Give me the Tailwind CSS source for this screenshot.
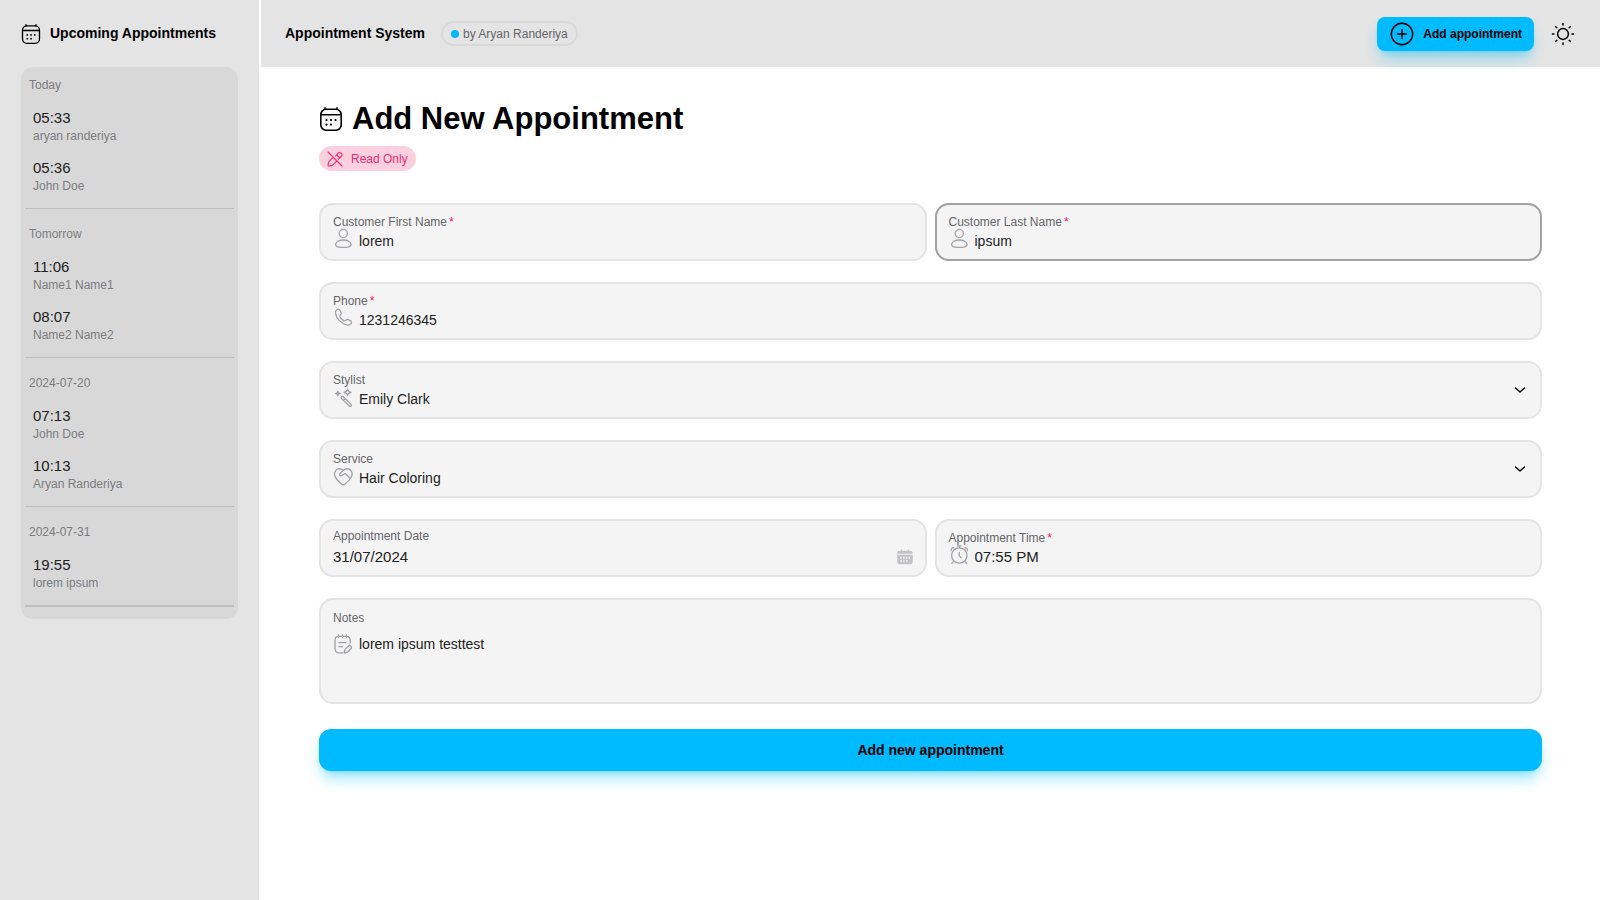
<!DOCTYPE html>
<html lang="en">
<head>
<meta charset="utf-8">
<meta name="viewport" content="width=device-width, initial-scale=1">
<title>Appointment System</title>
<script src="https://cdn.jsdelivr.net/npm/@tailwindcss/browser@4"></script>
</head>
<body class="min-h-screen flex gap-0.5 bg-white font-['Liberation_Sans',Arial,sans-serif] text-[#11181c]">

<svg class="hidden" aria-hidden="true">
  <symbol id="calendar" viewBox="0 0 24 24">
    <g fill="none" stroke="currentColor" stroke-width="1.600" stroke-linecap="round"><rect x="1.800" y="2.300" width="20.400" height="20.900" rx="5.200"/><path d="M6 2.300V.9M18 2.300V.9M2 7.800h20"/></g>
    <path fill="none" stroke="currentColor" stroke-width="2.200" stroke-linecap="round" d="M7.500 13.100h.01M12 13.100h.01M16.500 13.100h.01M7.500 17.600h.01M12 17.600h.01"/>
  </symbol>
  <symbol id="user" viewBox="0 0 20 20">
    <g fill="none" stroke="currentColor" stroke-width="1.3"><circle cx="10.300" cy="5.500" r="4.100"/><path d="M10.300 12c-4.300 0-7.700 2-7.700 4.400 0 2.300 2 3 7.700 3s7.700-.7 7.700-3c0-2.400-3.400-4.400-7.700-4.400z"/></g>
  </symbol>
</svg>

<aside class="w-[259px] shrink-0 bg-[#e4e4e4]">
  <h2 class="h-[67px] flex items-center gap-[9px] pl-[21px] text-[14px] font-bold text-black">
    <svg class="size-5"><use href="#calendar"/></svg>Upcoming Appointments
  </h2>
  <div class="ml-[21px] mr-[21px] rounded-xl bg-[#d8d8d8] px-1 pt-2 pb-3 flex flex-col gap-[15px] text-[12px] text-[#7c7c80]">
    <section class="flex flex-col gap-[13px] border-b border-[#bdbdbd] pb-[13px]">
      <h3 class="px-1 leading-5">Today</h3>
      <div class="px-2 leading-[18px]"><p class="text-[15px] leading-[19px] text-[#222]">05:33</p><p>aryan randeriya</p></div>
      <div class="px-2 leading-[18px]"><p class="text-[15px] leading-[19px] text-[#222]">05:36</p><p>John Doe</p></div>
    </section>
    <section class="flex flex-col gap-[13px] border-b border-[#bdbdbd] pb-[13px]">
      <h3 class="px-1 leading-5">Tomorrow</h3>
      <div class="px-2 leading-[18px]"><p class="text-[15px] leading-[19px] text-[#222]">11:06</p><p>Name1 Name1</p></div>
      <div class="px-2 leading-[18px]"><p class="text-[15px] leading-[19px] text-[#222]">08:07</p><p>Name2 Name2</p></div>
    </section>
    <section class="flex flex-col gap-[13px] border-b border-[#bdbdbd] pb-[13px]">
      <h3 class="px-1 leading-5">2024-07-20</h3>
      <div class="px-2 leading-[18px]"><p class="text-[15px] leading-[19px] text-[#222]">07:13</p><p>John Doe</p></div>
      <div class="px-2 leading-[18px]"><p class="text-[15px] leading-[19px] text-[#222]">10:13</p><p>Aryan Randeriya</p></div>
    </section>
    <section class="flex flex-col gap-[13px] border-b-2 border-[#bdbdbd] pb-[13px]">
      <h3 class="px-1 leading-5">2024-07-31</h3>
      <div class="px-2 leading-[18px]"><p class="text-[15px] leading-[19px] text-[#222]">19:55</p><p>lorem ipsum</p></div>
    </section>
  </div>
</aside>

<div class="flex-1 min-w-0">
  <header class="h-[67px] bg-[#e4e4e4] flex items-center pl-6 pr-6">
    <span class="text-[14px] font-bold text-black">Appointment System</span>
    <a href="#" class="ml-4 flex h-[25px] items-center gap-1 rounded-full border-2 border-[#d8d8d8] px-2 text-[12px] text-[#66666a]"><span class="size-2 rounded-full bg-[#00b7fd]"></span>by Aryan Randeriya</a>
    <button type="button" class="ml-auto flex h-[34px] items-center gap-2 rounded-lg bg-[#00bbff] px-3 text-[12px] font-bold text-black shadow-lg shadow-[#00bbff]/40">
      <svg class="size-[26px]" viewBox="0 0 26 26" fill="none" stroke="currentColor" stroke-width="1.500" stroke-linecap="round"><circle cx="13" cy="13" r="10.700"/><path d="M13 8.500v9M8.500 13h9"/></svg>
      Add appointment
    </button>
    <button type="button" aria-label="Toggle theme" class="ml-4 text-black">
      <svg class="size-[26px]" viewBox="0 0 26 26" fill="none" stroke="currentColor" stroke-width="1.500" stroke-linecap="round"><circle cx="13" cy="13" r="5.400"/><path d="M13 2.500v1.500M13 22v1.500M2.500 13h1.500M22 13h1.500M5.600 5.600l1.200 1.200M19.200 19.200l1.200 1.200M5.600 20.400l1.200-1.200M19.200 6.800l1.200-1.200"/></svg>
    </button>
  </header>

  <main class="px-[58px] pt-8 pb-8">
    <h1 class="flex h-10 items-center gap-[9px] text-[31px] font-bold text-black"><svg class="size-6"><use href="#calendar"/></svg>Add New Appointment</h1>
    <span class="mt-[7px] inline-flex h-[25px] items-center gap-2 rounded-full bg-[#fdd0df] px-2 text-[12px] text-[#f02c72] align-top">
      <svg class="size-4" viewBox="0 0 16 16" fill="none" stroke="currentColor" stroke-width="1.200" stroke-linecap="round" stroke-linejoin="round"><path d="M1 1l14 14M8.700 4.800l2.200-2.500c1.100-1.200 2.300-1 3.300 0 1 .9 1.100 2.100 0 3.200l-2.800 2.600M6.300 6.100L2.200 10.400c-.5.500-.7 1-.8 1.700l-.3 2c-.1.700.3 1 1 .9l2-.3c.7-.1 1.200-.3 1.700-.8l4.100-4.100M9.800 3.500c.5 1.700 1.600 2.800 3.300 3.300"/></svg>
      Read Only
    </span>

    <form class="mt-8 flex flex-col gap-[21px]">
      <div class="grid grid-cols-2 gap-2">
        <div class="h-[58px] rounded-[14px] border-2 border-[#e4e4e4] bg-[#f4f4f4] px-3 pt-2">
          <label for="first" class="block text-[12px] leading-[18px] text-[#66666a]">Customer First Name<span class="ml-0.5 text-[#f31260]">*</span></label>
          <div class="flex items-center gap-1.5 text-[#a1a1a6]"><svg class="-mt-1.5 size-5 shrink-0"><use href="#user"/></svg><input id="first" value="lorem" class="min-w-0 flex-1 bg-transparent text-[14px] leading-5 text-[#222] outline-none"></div>
        </div>
        <div class="h-[58px] rounded-[14px] border-2 border-[#a1a1a6] bg-[#f4f4f4] px-3 pt-2">
          <label for="last" class="block text-[12px] leading-[18px] text-[#66666a]">Customer Last Name<span class="ml-0.5 text-[#f31260]">*</span></label>
          <div class="flex items-center gap-1.5 text-[#a1a1a6]"><svg class="-mt-1.5 size-5 shrink-0"><use href="#user"/></svg><input id="last" value="ipsum" class="min-w-0 flex-1 bg-transparent text-[14px] leading-5 text-[#222] outline-none"></div>
        </div>
      </div>

      <div class="h-[58px] rounded-[14px] border-2 border-[#e4e4e4] bg-[#f4f4f4] px-3 pt-2">
        <label for="phone" class="block text-[12px] leading-[18px] text-[#66666a]">Phone<span class="ml-0.5 text-[#f31260]">*</span></label>
        <div class="flex items-center gap-1.5 text-[#a1a1a6]">
          <svg class="-mt-1.5 size-5 shrink-0" viewBox="0 0 20 20" fill="none" stroke="currentColor" stroke-width="1.300" stroke-linejoin="round"><path d="M6.900 3.100c-.6-1.300-2-1.300-3-.6C2.500 3.400 2.300 4.800 2.500 6.300c.4 2.600 1.900 5.400 4.100 7.600s5 3.800 7.600 4.200c1.500.2 2.900 0 3.800-1.400.7-1 .7-2.400-.6-3l-2-1c-.9-.4-1.600-.3-2.200.4-.8.900-1.600 1.100-2.700.4-1.300-.8-2.500-2-3.300-3.300-.7-1.100-.5-1.900.4-2.700.7-.6.800-1.300.4-2.200z"/></svg>
          <input id="phone" type="tel" value="1231246345" class="min-w-0 flex-1 bg-transparent text-[14px] leading-5 text-[#222] outline-none"></div>
      </div>

      <div class="flex h-[58px] items-center rounded-[14px] border-2 border-[#e4e4e4] bg-[#f4f4f4] px-3">
        <div class="min-w-0 flex-1">
          <label for="stylist" class="block text-[12px] leading-[18px] text-[#66666a]">Stylist</label>
          <div class="flex items-center gap-1.5 text-[#a1a1a6]">
            <svg class="-mt-0.5 size-5 shrink-0" viewBox="0 0 20 20" fill="none" stroke="currentColor" stroke-width="1.300" stroke-linejoin="round"><path d="M8.400 8.700c.6-.6 1.400-.6 2 0l7.600 7.600c.6.600.6 1.300.1 1.800s-1.200.5-1.800-.1L8.500 10.600c-.6-.6-.6-1.400-.1-1.900zM12.300 10.600l-1.900 1.900M14.500 1l1 2.300 2.500 1-2.500 1-1 2.300-1-2.300-2.500-1 2.500-1zM4.800 3.300l.7 1.600 1.700.6-1.700.7-.7 1.600-.6-1.600-1.700-.7 1.700-.6z"/></svg>
            <select id="stylist" class="min-w-0 flex-1 appearance-none bg-transparent text-[14px] leading-5 text-[#222] outline-none"><option>Emily Clark</option></select></div>
        </div>
        <svg class="size-4 text-black" viewBox="0 0 16 16" fill="none" stroke="currentColor" stroke-width="1.400" stroke-linecap="round" stroke-linejoin="round"><path d="M3.500 6L8 10l4.500-4"/></svg>
      </div>

      <div class="flex h-[58px] items-center rounded-[14px] border-2 border-[#e4e4e4] bg-[#f4f4f4] px-3">
        <div class="min-w-0 flex-1">
          <label for="service" class="block text-[12px] leading-[18px] text-[#66666a]">Service</label>
          <div class="flex items-center gap-1.5 text-[#a1a1a6]">
            <svg class="-mt-0.5 size-5 shrink-0" viewBox="0 0 20 20" fill="none" stroke="currentColor" stroke-width="1.300" stroke-linecap="round" stroke-linejoin="round"><path d="M10.300 3.300C7.800 1.200 4.700 1.200 2.900 3.400 1 5.700 1.200 8.600 2.900 11c1.600 2.300 3.800 4.500 5.600 6 1.300 1.100 2.300 1.100 3.600 0 1.800-1.500 4-3.700 5.600-6 1.700-2.400 1.900-5.300 0-7.600-1.800-2.200-4.900-2.200-7.400-.1zM10.300 3.300L7.300 6.200c-.8.700-.9 1.600-.3 2.200s1.500.5 2.300-.1l1.700-1.200c.8-.6 1.500-.5 2.100.1l3.700 3.800"/></svg>
            <select id="service" class="min-w-0 flex-1 appearance-none bg-transparent text-[14px] leading-5 text-[#222] outline-none"><option>Hair Coloring</option></select></div>
        </div>
        <svg class="size-4 text-black" viewBox="0 0 16 16" fill="none" stroke="currentColor" stroke-width="1.400" stroke-linecap="round" stroke-linejoin="round"><path d="M3.500 6L8 10l4.500-4"/></svg>
      </div>

      <div class="grid grid-cols-2 gap-2">
        <div class="h-[58px] rounded-[14px] border-2 border-[#e4e4e4] bg-[#f4f4f4] px-3 pt-1.5">
          <label for="date" class="block text-[12px] leading-[18px] text-[#66666a]">Appointment Date</label>
          <div class="flex items-center pt-0.5 text-[#c4c4c8]"><input id="date" value="31/07/2024" class="min-w-0 flex-1 bg-transparent text-[15px] leading-5 text-[#222] outline-none">
            <svg class="size-4 shrink-0" viewBox="0 0 16 16" fill="currentColor"><path d="M4 .5h1.200v1.300h5.600V.5H12v1.300h1.500c1.400 0 2.300.9 2.300 2.500v.4H.2v-.4c0-1.600.9-2.500 2.300-2.500H4z"/><path fill-rule="evenodd" d="M.2 5.800h15.600v6.700c0 1.900-.9 2.800-2.600 2.800H2.800c-1.700 0-2.600-.9-2.600-2.800zM3.300 8v1.400h1.500V8zm2.800 0v1.400h1.500V8zm2.800 0v1.400h1.500V8zm2.700 0v1.400h1.500V8zM3.300 11.300v1.400h1.500v-1.400zm2.800 0v1.400h1.500v-1.400zm2.800 0v1.400h1.500v-1.400z"/></svg></div>
        </div>
        <div class="h-[58px] rounded-[14px] border-2 border-[#e4e4e4] bg-[#f4f4f4] px-3 pt-2">
          <label for="time" class="block text-[12px] leading-[18px] text-[#66666a]">Appointment Time<span class="ml-0.5 text-[#f31260]">*</span></label>
          <div class="flex items-center gap-1.5 text-[#a1a1a6]">
            <svg class="-mt-1 size-5 shrink-0" viewBox="0 0 20 20" fill="none" stroke="currentColor" stroke-width="1.300" stroke-linecap="round"><circle cx="10.300" cy="10.500" r="7.700"/><path d="M10.300 7.500v3.300l1.700 1.900M10.300 2.500V.8M8.500.8h3.600M2.200 5.500c-.2-1.800.8-2.900 2.600-2.700M18.400 5.500c.2-1.800-.8-2.900-2.600-2.700M4.200 17l-1.300 1.300M16.400 17l1.300 1.300"/></svg>
            <input id="time" value="07:55 PM" class="min-w-0 flex-1 bg-transparent text-[15px] leading-5 text-[#222] outline-none"></div>
        </div>
      </div>

      <div class="rounded-[14px] border-2 border-[#e4e4e4] bg-[#f4f4f4] px-3 pt-[9px] pb-1.5">
        <label for="notes" class="block text-[12px] leading-[18px] text-[#66666a]">Notes</label>
        <div class="mt-[7px] flex items-start gap-1.5 text-[#a1a1a6]">
          <svg class="size-5 shrink-0" viewBox="0 0 20 20" fill="none" stroke="currentColor" stroke-width="1.300" stroke-linecap="round" stroke-linejoin="round"><path d="M17.200 9V7.500c0-4.500-.8-5.200-5-5.200H7c-4.200 0-5 .7-5 5.200V13c0 4.500.8 5.900 5 5.900h2.500M5.500 1v2.500M9.500 1v2.500M13.500 1v2.500M6 8.700h7M6 12.700h3.500M17.800 12c-.8-.8-1.700-.6-2.500.2l-3.200 3.200c-.4.400-.6.900-.7 1.500l-.3 1.600c0 .4.100.5.500.5l1.600-.3c.6-.1 1-.3 1.500-.7l3.200-3.300c.7-.8.800-1.800-.1-2.700z"/></svg>
          <textarea id="notes" rows="3" class="block h-[62px] min-w-0 flex-1 resize-none bg-transparent text-[14px] leading-5 text-[#222] outline-none">lorem ipsum testtest</textarea></div>
      </div>

      <button type="submit" class="mt-1 h-[42px] rounded-xl bg-[#00bbff] text-[14px] font-bold text-black shadow-lg shadow-[#00bbff]/40">Add new appointment</button>
    </form>
  </main>
</div>
</body>
</html>
